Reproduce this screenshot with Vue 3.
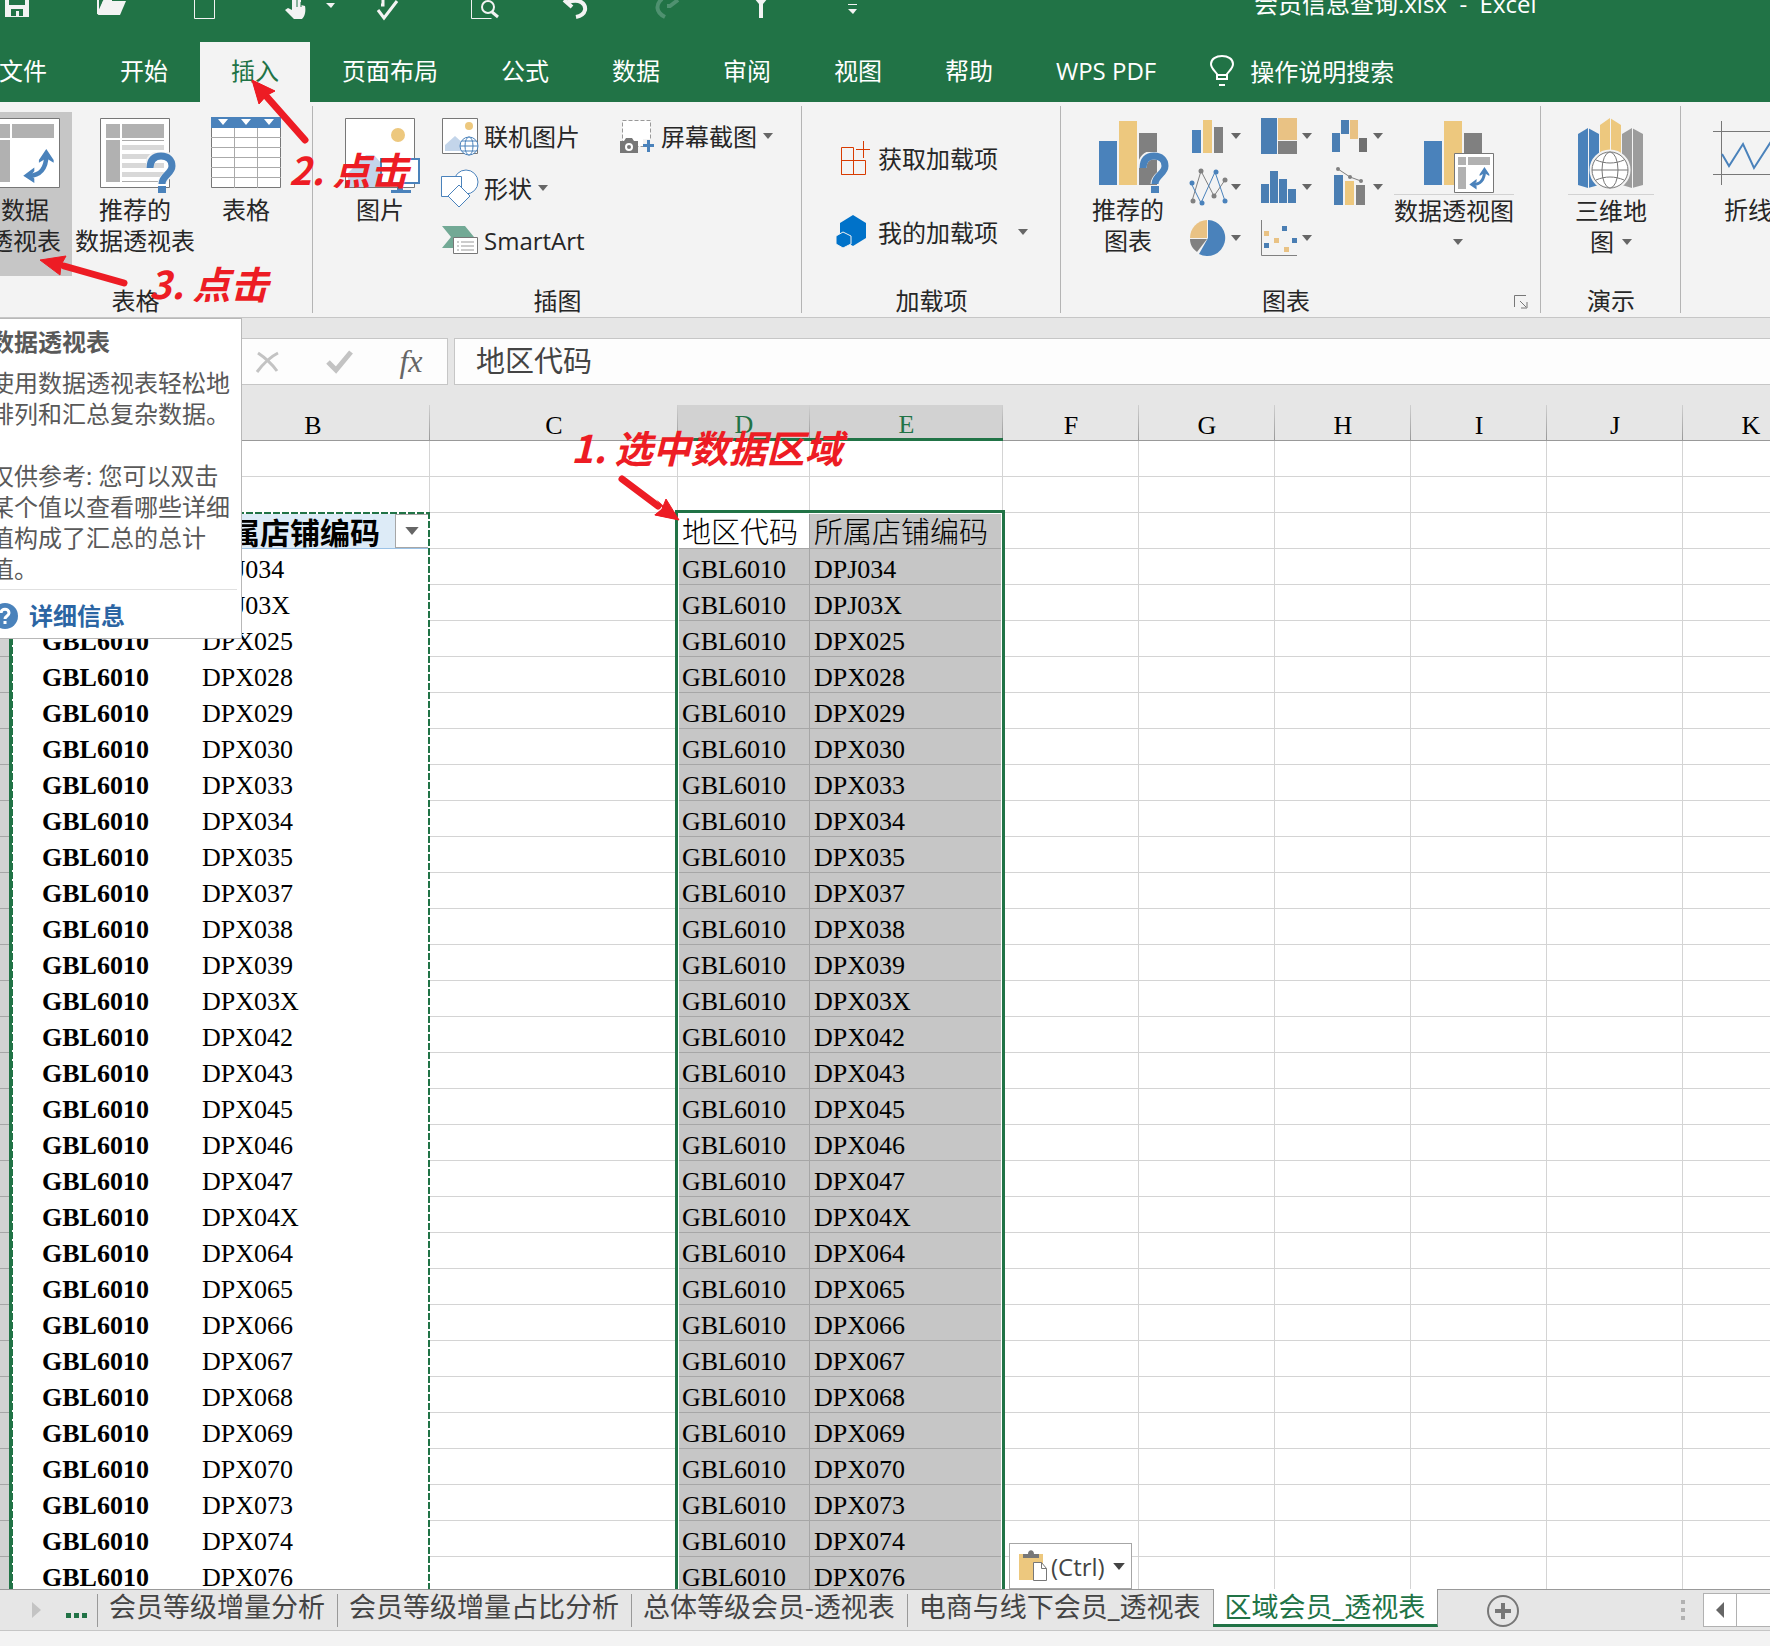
<script setup>
const menuTabs = ['文件', '开始', '插入', '页面布局', '公式', '数据', '审阅', '视图', '帮助', 'WPS PDF']
const columns = ['A', 'B', 'C', 'D', 'E', 'F', 'G', 'H', 'I', 'J', 'K']
const emptyColumns = ['F', 'G', 'H', 'I', 'J', 'K']
const region = 'GBL6010'
const shops = [
  'DPJ034', 'DPJ03X', 'DPX025', 'DPX028', 'DPX029', 'DPX030', 'DPX033', 'DPX034', 'DPX035', 'DPX037',
  'DPX038', 'DPX039', 'DPX03X', 'DPX042', 'DPX043', 'DPX045', 'DPX046', 'DPX047', 'DPX04X', 'DPX064',
  'DPX065', 'DPX066', 'DPX067', 'DPX068', 'DPX069', 'DPX070', 'DPX073', 'DPX074', 'DPX076',
]
const sheets = ['会员等级增量分析', '会员等级增量占比分析', '总体等级会员-透视表', '电商与线下会员_透视表', '区域会员_透视表']
const activeSheet = '区域会员_透视表'
</script>

<template>
  <div class="app">
    <svg class="defs" aria-hidden="true">
      <symbol id="caret" viewBox="0 0 10 6"><path d="M0 0h10L5 6z" fill="currentColor" /></symbol>
      <symbol id="swap" viewBox="0 0 34 38">
        <path d="M7 29C19 29 26 21 26 7" fill="none" stroke="#4a82bb" stroke-width="5" />
        <path d="M18 12L26 0l8 12v3l-8-5-8 5zM13 20L1 29l12 8v-5l-4-3 4-5z" fill="#4a82bb" />
      </symbol>
      <symbol id="question" viewBox="0 0 30 42">
        <path d="M3 16C3 7 8 3 15 3s12 4 12 11c0 8-11 10-11 18" fill="none" stroke="#f3f3f3" stroke-width="9" />
        <path d="M4 16C4 8 8 4 15 4s11 4 11 10c0 8-10 9-10 18" fill="none" stroke="#4a82bb" stroke-width="7" />
        <path d="M12 34h8v7h-8z" fill="#4a82bb" />
      </symbol>
    </svg>

    <header class="top">
      <div class="quick">
        <svg class="quick-icons" viewBox="0 0 880 24" aria-hidden="true">
          <path d="M5 0h24v17H5z" fill="#f3f3f3" /><path d="M9 0h16v5H9zM11 9h12v7h-4v-5h-3v5h-5z" fill="#217346" />
          <path d="M98 0v14L104 1h8" fill="none" stroke="#f3f3f3" stroke-width="2" /><path d="M103 1h23l-6 14H98z" fill="#f3f3f3" />
          <path d="M194.500-2v20.500h20V-2" fill="none" stroke="#f3f3f3" />
          <path d="M292 0v10l-4-2-3 2 9 9h8c3-3 4-8 3-13l-4-1V0z" fill="#f3f3f3" /><path d="M297 0v7M301 2v5" stroke="#217346" />
          <path d="M326 3h9l-4 5z" fill="#f3f3f3" />
          <path d="M378 10l6 8L397 1M381 5h2V0" fill="none" stroke="#f3f3f3" stroke-width="3" />
          <path d="M471.500-2v20.500h20" fill="none" stroke="#f3f3f3" /><circle cx="488" cy="7" r="6" fill="none" stroke="#f3f3f3" stroke-width="2" /><path d="M492 12l6 5" stroke="#f3f3f3" stroke-width="3" />
          <path d="M564 0l8 7M568 2c12-4 18 2 17 8-1 4-4 6-9 7" fill="none" stroke="#f3f3f3" stroke-width="4" />
          <path d="M678 0l-8 6h-3M662-1c-6 5-7 13 3 18" fill="none" stroke="#4f9170" stroke-width="4" />
          <path d="M754-2l5 6v14h4V4l5-6" fill="#f3f3f3" />
          <path d="M848 4h9v1h-9zM848 9h9l-4 5z" fill="#f3f3f3" />
        </svg>
        <h1 class="title">会员信息查询.xlsx&nbsp; -&nbsp; Excel</h1>
      </div>
      <nav class="menu">
        <button v-for="t in menuTabs" :key="t" type="button" class="menu-tab" :class="{ active: t === '插入', file: t === '文件' }">{{ t }}</button>
        <button type="button" class="tell-me">
          <svg width="24" height="34" viewBox="0 0 24 34" fill="none" stroke="#fff" stroke-width="2" aria-hidden="true">
            <path d="M7 25v-5C4 16 1 14 1 10 1 5 6 2 12 2s11 3 11 8c0 4-3 6-6 10v5zM7 21h10M9 31h6" />
          </svg>
          操作说明搜索
        </button>
      </nav>
    </header>

    <section class="ribbon">
      <div class="group tables">
        <div class="tools">
          <button type="button" class="big pressed">
            <svg width="80" height="76" viewBox="0 0 80 76" aria-hidden="true">
              <path d="M5.500.500h69v69h-69z" fill="#fff" stroke="#777" /><path d="M11 6h14v14H11zM27 6h42v14H27zM11 22h14v42H11z" fill="#b1b1b1" />
              <use href="#swap" x="36" y="31" width="34" height="35" />
            </svg>
            <span>数据</span><span>透视表</span>
          </button>
          <button type="button" class="big wide">
            <svg width="80" height="76" viewBox="0 0 80 76" aria-hidden="true">
              <path d="M5.500.500h69v69h-69z" fill="#fff" stroke="#777" /><path d="M11 6h14v14H11zM27 6h42v14H27zM11 22h14v42H11z" fill="#b1b1b1" />
              <path d="M27 27h42v5H27zM27 36h42v5H27zM27 45h42v5H27zM27 54h42v5H27z" fill="#d8d8d8" /><path d="M27 22.500h42M27 63.500h42" stroke="#aaa" />
              <use href="#question" x="51" y="34" width="30" height="42" />
            </svg>
            <span>推荐的</span><span>数据透视表</span>
          </button>
          <button type="button" class="big">
            <svg width="80" height="76" viewBox="0 0 80 76" aria-hidden="true">
              <path d="M5.500.500h69v69h-69z" fill="#fff" stroke="#777" />
              <path d="M5 19.500h70M5 29.500h70M5 39.500h70M5 49.500h70M5 59.500h70M28.500 10v60M51.500 10v60" stroke="#aaa" />
              <path d="M5-1h70v11H5z" fill="#4a82bb" /><path d="M12 1h10l-5 6zM35 1h10l-5 6zM58 1h10l-5 6z" fill="#fff" />
            </svg>
            <span>表格</span>
          </button>
        </div>
        <div class="caption">表格</div>
      </div>

      <div class="group pictures">
        <div class="tools">
          <button type="button" class="big">
            <svg width="80" height="76" viewBox="0 0 80 76" aria-hidden="true">
              <path d="M5.500.500h69v69h-69z" fill="#fff" stroke="#777" /><circle cx="58" cy="17" r="7" fill="#edc87e" />
              <path d="M8 69V55l18-18h8l16 18v14z" fill="#c3d5ea" />
              <path d="M41 41h38v24H41z" fill="#fff" stroke="#4a82bb" stroke-width="2" /><path d="M57 66h6v6h8v3H51v-3h6z" fill="#4a82bb" />
            </svg>
            <span>图片</span>
          </button>
          <div class="stack">
            <button type="button" class="small">
              <svg width="38" height="40" viewBox="0 0 38 40" aria-hidden="true">
                <path d="M2.500 2.500h35v35h-35z" fill="#fff" stroke="#777" /><circle cx="29" cy="10" r="4" fill="#edc87e" /><path d="M5 35V29l10-9 10 9v6z" fill="#c3d5ea" />
                <g fill="#fff" stroke="#4a82bb"><circle cx="29" cy="30" r="9" /><ellipse cx="29" cy="30" rx="4" ry="9" /><path d="M20 30h18M22 25h14M22 35h14" /></g>
              </svg>
              联机图片
            </button>
            <button type="button" class="small">
              <svg width="38" height="40" viewBox="0 0 38 40" fill="#fff" stroke="#4a82bb" aria-hidden="true">
                <circle cx="26" cy="14" r="12" /><path d="M1.500 8.500h20v20h-20z" /><path d="M19 17l11 11-11 11L8 28z" />
              </svg>
              形状<svg class="caret"><use href="#caret" /></svg>
            </button>
            <button type="button" class="small">
              <svg width="38" height="40" viewBox="0 0 38 40" aria-hidden="true">
                <path d="M2 6h23l9 11-9 11H2l9-11z" fill="#72a995" /><path d="M13.500 17.500h24v16h-24z" fill="#fff" stroke="#777" /><path d="M17 22h2m2 0h13M17 26h2m2 0h13M17 30h2m2 0h13" stroke="#999" />
              </svg>
              SmartArt
            </button>
          </div>
          <div class="stack narrow">
            <button type="button" class="small">
              <svg width="38" height="40" viewBox="0 0 38 40" aria-hidden="true">
                <path d="M5.500 4.500h28v26h-28z" fill="#fff" stroke="#999" stroke-dasharray="4 2" /><path d="M3 25h4l2-3h6l2 3h4v12H3z" fill="#777" /><circle cx="12" cy="31" r="3" fill="none" stroke="#fff" stroke-width="2" />
                <path d="M26 23h12v13H26z" fill="#f3f3f3" /><path d="M30 24h3v4h4v3h-4v5h-3v-5h-4v-3h4z" fill="#4a82bb" />
              </svg>
              屏幕截图<svg class="caret"><use href="#caret" /></svg>
            </button>
          </div>
        </div>
        <div class="caption">插图</div>
      </div>

      <div class="group addins">
        <div class="tools column">
          <button type="button" class="small">
            <svg width="38" height="40" viewBox="0 0 38 40" fill="none" stroke="#d83b01" aria-hidden="true">
              <path d="M5.500 9.500h12v27h-12zM5.500 22.500h24v14h-24M17.500 22.500v14M27.500 3v17M20 11.500h14" />
            </svg>
            获取加载项
          </button>
          <button type="button" class="small">
            <svg width="38" height="40" viewBox="0 0 38 40" fill="#0072c9" aria-hidden="true">
              <path d="M17 3l13 8v15l-13 8-13-8V11z" /><path d="M7 20l8 4v8l-8 4-7-4v-8z" stroke="#f3f3f3" />
            </svg>
            我的加载项<svg class="caret far"><use href="#caret" /></svg>
          </button>
        </div>
        <div class="caption">加载项</div>
      </div>

      <div class="group charts">
        <div class="tools">
          <button type="button" class="big">
            <svg width="80" height="76" viewBox="0 0 80 76" aria-hidden="true">
              <path d="M11 23h18v44H11z" fill="#4a82bb" /><path d="M31 3h18v64H31z" fill="#edc87e" /><path d="M51 15h18v52H51z" fill="#808080" />
              <use href="#question" x="51" y="34" width="30" height="42" />
            </svg>
            <span>推荐的</span><span>图表</span>
          </button>
          <div class="chart-grid">
            <button type="button" class="mini" aria-label="柱形图">
              <svg width="38" height="40" viewBox="0 0 38 40"><path d="M2 14h9v23H2z" fill="#4a82bb" /><path d="M13 4h9v33h-9z" fill="#edc87e" /><path d="M24 11h9v26h-9z" fill="#808080" /></svg>
              <svg class="caret"><use href="#caret" /></svg>
            </button>
            <button type="button" class="mini" aria-label="层次结构图">
              <svg width="38" height="40" viewBox="0 0 38 40"><path d="M0 2h16v36H0z" fill="#4a7eb3" /><path d="M17 2h19v22H17z" fill="#e9c284" /><path d="M17 25h19v13H17z" fill="#808080" /></svg>
              <svg class="caret"><use href="#caret" /></svg>
            </button>
            <button type="button" class="mini" aria-label="瀑布图">
              <svg width="38" height="40" viewBox="0 0 38 40"><path d="M0 17h8v19H0zM9 4h8v14H9z" fill="#4a7eb3" /><path d="M18 4h8v19h-8z" fill="#e9c284" /><path d="M27 22h8v14h-8z" fill="#707070" /></svg>
              <svg class="caret"><use href="#caret" /></svg>
            </button>
            <button type="button" class="mini" aria-label="折线图">
              <svg width="38" height="40" viewBox="0 0 38 40">
                <path d="M2 34L11 4l13 25L35 13" fill="none" stroke="#808080" /><path d="M1 16l10 20L25 5l10 29" fill="none" stroke="#4a82bb" />
                <g fill="#808080"><circle cx="3" cy="34" r="2.500" /><circle cx="11" cy="4" r="2.500" /><circle cx="24" cy="29" r="2.500" /><circle cx="35" cy="13" r="2.500" /></g>
                <g fill="#4a82bb"><circle cx="2" cy="16" r="2.500" /><circle cx="12" cy="36" r="2.500" /><circle cx="26" cy="5" r="2.500" /><circle cx="35" cy="34" r="2.500" /></g>
              </svg>
              <svg class="caret"><use href="#caret" /></svg>
            </button>
            <button type="button" class="mini" aria-label="统计图">
              <svg width="38" height="40" viewBox="0 0 38 40" fill="#4a7eb3"><path d="M0 17h8v19H0zM9 4h8v32H9zM18 12h8v24h-8zM27 22h8v14h-8z" /></svg>
              <svg class="caret"><use href="#caret" /></svg>
            </button>
            <button type="button" class="mini" aria-label="组合图">
              <svg width="38" height="40" viewBox="0 0 38 40"><path d="M2 8h9v30H2z" fill="#4a7eb3" /><path d="M13 14h9v24h-9z" fill="#edc87e" /><path d="M24 18h9v20h-9z" fill="#808080" /><path d="M6 2l12 8 11 4" fill="none" stroke="#808080" /><g fill="#808080"><circle cx="6" cy="2" r="2" /><circle cx="18" cy="10" r="2" /><circle cx="29" cy="14" r="2" /></g></svg>
              <svg class="caret"><use href="#caret" /></svg>
            </button>
            <button type="button" class="mini" aria-label="饼图">
              <svg width="38" height="40" viewBox="0 0 38 40"><path d="M18 20V2A18 18 0 1 1 9 36z" fill="#4a82bb" /><path d="M17 20V2A18 18 0 0 0 0 20z" fill="#e9c284" /><path d="M17 21H0c0 6 3 10 7 13z" fill="#808080" /></svg>
              <svg class="caret"><use href="#caret" /></svg>
            </button>
            <button type="button" class="mini" aria-label="散点图">
              <svg width="38" height="40" viewBox="0 0 38 40"><path d="M.500 2v35.500H36" fill="none" stroke="#808080" /><path d="M3 13h5v5H3zM13 20h5v5h-5zM23 29h5v5h-5z" fill="#e9c284" /><path d="M21 8h5v5h-5zM3 25h5v5H3zM31 20h5v5h-5z" fill="#4a7eb3" /></svg>
              <svg class="caret"><use href="#caret" /></svg>
            </button>
          </div>
          <button type="button" class="big split pivot">
            <svg width="80" height="76" viewBox="0 0 80 76" aria-hidden="true">
              <path d="M10 23h18v44H10z" fill="#4a82bb" /><path d="M30 3h18v64H30z" fill="#edc87e" /><path d="M50 15h18v52H50z" fill="#808080" />
              <path d="M40.500 35.500h39v39h-39z" fill="#fff" stroke="#777" /><path d="M44 39h8v8h-8zM54 39h22v8H54zM44 49h8v22h-8z" fill="#b1b1b1" />
              <use href="#swap" x="53" y="49" width="24" height="23" />
            </svg>
            <span>数据透视图</span><span class="lone"><svg class="caret"><use href="#caret" /></svg></span>
          </button>
        </div>
        <div class="caption">图表</div>
        <button type="button" class="launcher" aria-label="图表选项">
          <svg width="14" height="14" viewBox="0 0 14 14" fill="none" stroke="#777"><path d="M.500 12V.500H12M6 6l6 6M13 7v6H7" /></svg>
        </button>
      </div>

      <div class="group tours">
        <div class="tools">
          <button type="button" class="big split">
            <svg width="80" height="76" viewBox="0 0 80 76" aria-hidden="true">
              <path d="M7 16l10-6 11 6v51l-11 3-10-3z" fill="#4a82bb" /><path d="M29 7L39 0l11 7v40H29z" fill="#edc87e" /><path d="M51 16l10-6 11 6v51l-11 3-10-3z" fill="#9c9c9c" />
              <path d="M17.500 10v60M39.500 0v40M61.500 10v60" stroke="#f3f3f3" />
              <g fill="#fff" stroke="#777"><circle cx="39" cy="52" r="19" stroke="#f3f3f3" stroke-width="3" /><circle cx="39" cy="52" r="18" /><ellipse cx="39" cy="52" rx="8" ry="18" /><path d="M21 52h36" /><path d="M25 42c9 4 19 4 28 0M25 62c9-4 19-4 28 0" fill="none" /></g>
            </svg>
            <span>三维地</span><span>图<svg class="caret"><use href="#caret" /></svg></span>
          </button>
        </div>
        <div class="caption">演示</div>
      </div>

      <div class="group sparklines">
        <div class="tools">
          <button type="button" class="big">
            <svg width="80" height="76" viewBox="0 0 80 76" aria-hidden="true">
              <path d="M13.500 3v64M5 13.500h74M5 56.500h74" stroke="#777" /><path d="M14 36l7 12 14-22 11 24 18-28 14 20" fill="none" stroke="#4a82bb" stroke-width="2" />
            </svg>
            <span>折线</span>
          </button>
        </div>
      </div>
    </section>

    <section class="formula">
      <div class="formula-tools">
        <button type="button" aria-label="取消"><svg width="26" height="24" viewBox="0 0 26 24" fill="none" stroke="#c3c3c3" stroke-width="3"><path d="M3 22C9 14 16 7 24 3M4 3c6 4 14 11 19 18" /></svg></button>
        <button type="button" aria-label="输入"><svg width="28" height="24" viewBox="0 0 28 24" fill="none" stroke="#c3c3c3" stroke-width="5"><path d="M3 12l8 8L26 2" /></svg></button>
        <button type="button" class="fx" aria-label="插入函数">fx</button>
      </div>
      <input class="formula-input" value="地区代码" aria-label="编辑栏">
    </section>

    <main class="grid">
      <table>
        <colgroup>
          <col class="w-head"><col class="w-a"><col class="w-b"><col class="w-c"><col class="w-d"><col class="w-e">
          <col v-for="c in emptyColumns" :key="c" class="w-f">
        </colgroup>
        <thead>
          <tr><th /><th v-for="c in columns" :key="c" :class="{ picked: c === 'D' || c === 'E' }">{{ c }}</th></tr>
        </thead>
        <tbody>
          <tr v-for="n in 2" :key="'blank' + n"><td class="row-head" /><td v-for="c in columns" :key="c" /></tr>
          <tr>
            <td class="row-head" /><td class="field" /><td class="field b-field">所属店铺编码</td><td />
            <td class="cn first">地区代码</td><td class="sel cn">所属店铺编码</td><td v-for="c in emptyColumns" :key="c" />
          </tr>
          <tr v-for="s in shops" :key="s">
            <td class="row-head" /><td class="pivot-cell region">{{ region }}</td><td class="pivot-cell">{{ s }}</td><td />
            <td class="sel">{{ region }}</td><td class="sel">{{ s }}</td><td v-for="c in emptyColumns" :key="c" />
          </tr>
        </tbody>
      </table>
      <div class="copied" />
      <div class="selection" />
      <button type="button" class="filter" aria-label="筛选"><svg width="14" height="8"><use href="#caret" /></svg></button>
      <button type="button" class="paste">
        <svg width="30" height="32" viewBox="0 0 30 32" aria-hidden="true">
          <path d="M1 4h24v26H1z" fill="#edc87e" /><path d="M5 8V4h5c0-5 6-5 6 0h5v4z" fill="#777" /><path d="M15.500 12.500h8l5 6v12h-13z" fill="#fff" stroke="#777" /><path d="M23.500 12.500v6h5" fill="none" stroke="#777" />
        </svg>
        (Ctrl)
        <svg class="paste-caret"><use href="#caret" /></svg>
      </button>
    </main>

    <footer class="bottom">
      <div class="sheets">
        <div class="sheet-nav">
          <svg width="9" height="16" viewBox="0 0 9 16"><path d="M0 0l9 8-9 8z" fill="#c3c3c3" /></svg>
          <svg width="22" height="5" viewBox="0 0 22 5"><path d="M0 0h5v5H0zM8 0h5v5H8zM16 0h5v5h-5z" fill="#217346" /></svg>
        </div>
        <button v-for="s in sheets" :key="s" type="button" class="sheet" :class="{ current: s === activeSheet }">{{ s }}</button>
        <button type="button" class="add" aria-label="新工作表">
          <svg width="34" height="34" viewBox="0 0 34 34" fill="none" stroke="#777"><circle cx="17" cy="17" r="15" stroke-width="2" /><path d="M17 9v16M9 17h16" stroke-width="4" /></svg>
        </button>
        <div class="scroll">
          <svg width="4" height="20" viewBox="0 0 4 20"><path d="M0 0h4v4H0zM0 8h4v4H0zM0 16h4v4H0z" fill="#b1b1b1" /></svg>
          <button type="button" class="scroll-left" aria-label="向左滚动"><svg width="8" height="16" viewBox="0 0 8 16"><path d="M8 0v16L0 8z" fill="#666" /></svg></button>
          <div class="thumb" />
        </div>
      </div>
    </footer>

    <aside class="tip">
      <strong>数据透视表</strong>
      <p>使用数据透视表轻松地<br>排列和汇总复杂数据。</p>
      <p>仅供参考: 您可以双击<br>某个值以查看哪些详细<br>值构成了汇总的总计<br>值。</p>
      <a href="#more">
        <svg width="28" height="28" viewBox="0 0 28 28" aria-hidden="true"><circle cx="14" cy="14" r="13" fill="#4a82bb" /><path d="M10 11c0-5 8-5 8 0 0 3-4 3-4 6M14 19v3" fill="none" stroke="#fff" stroke-width="3" /></svg>
        详细信息
      </a>
    </aside>

    <svg class="arrows" width="700" height="530" viewBox="0 0 700 530" aria-hidden="true">
      <g stroke="#ed1c24" stroke-width="7" stroke-linecap="round"><path d="M305 140l-38-43M124 283l-60-17M622 479l36 27" /></g>
      <g fill="#ed1c24"><path d="M252 80l23 11-9 5-7 8z" /><path d="M252 80l23 11-8 4-8 9z" stroke="#ed1c24" /><path d="M40 260l26-4-5 9-1 10z" stroke="#ed1c24" /><path d="M679 520l-25-5 9-6-6-9-1-1z" /><path d="M679 520l-24-5 7-6 4-10z" stroke="#ed1c24" /></g>
    </svg>
    <span class="note step-1">1. 选中数据区域</span>
    <span class="note step-2">2. 点击</span>
    <span class="note step-3">3. 点击</span>
  </div>
</template>

<style>
html, body { margin: 0; }
</style>

<style scoped>
.app {
  position: relative;
  display: flex;
  flex-direction: column;
  height: 100vh;
  overflow: hidden;
  background: #e6e6e6;
  color: #262626;
  font: 24px/31px "Open Sans", "Noto Sans CJK SC", sans-serif;
}
.defs { position: absolute; width: 0; height: 0; }
svg { display: block; flex: none; overflow: visible; }
button { margin: 0; padding: 0; border: 0; background: none; color: inherit; font: inherit; white-space: nowrap; }

.top { background: #217346; color: #fff; }
.quick { display: flex; height: 42px; }
.quick-icons { width: 880px; height: 24px; }
.title { margin: -12px 0 0 374px; font-size: 24px; line-height: 32px; font-weight: 400; white-space: nowrap; }
.menu { display: flex; gap: 1px; height: 60px; margin-left: -32px; }
.menu-tab { padding: 0 31px 4px; }
.menu-tab.file { padding-right: 41px; }
.menu-tab.active { background: #f3f3f3; color: #217346; }
.tell-me { display: flex; align-items: center; gap: 16px; margin-left: 22px; padding-bottom: 2px; }

.ribbon { display: flex; height: 215px; border-bottom: 1px solid #c6c6c6; background: #f3f3f3; overflow: hidden; }
.group { position: relative; flex: none; display: flex; flex-direction: column; box-sizing: border-box; padding-top: 10px; }
.group::after { content: ""; position: absolute; top: 4px; right: 0; width: 1px; height: 207px; background: #b4b4b4; }
.tools { display: flex; height: 174px; }
.caption { text-align: center; line-height: 30px; }
.tables { width: 355px; margin-left: -42px; padding-left: 20px; }
.tables .caption { margin-left: -20px; }
.pictures { width: 489px; }
.addins { width: 259px; }
.charts { width: 480px; }
.tours { width: 140px; }
.sparklines { width: 300px; }
.pictures .tools, .charts .tools, .sparklines .tools { padding-left: 19px; }
.tours .tools { justify-content: center; }
.charts .caption { padding-right: 30px; }
.big { width: 96px; height: 164px; padding-top: 6px; display: flex; flex-direction: column; align-items: center; }
.big span { display: flex; align-items: center; gap: 8px; height: 31px; }
.big.pressed { width: 94px; background: #c6c6c6; }
.big.wide { width: 126px; }
.big.split { width: 86px; }
.big.split svg + span { border-top: 1px solid #d2d2d2; align-self: stretch; justify-content: center; }
.big.split.pivot { width: 120px; }
.big .lone { padding-left: 8px; }
.caret { width: 10px; height: 6px; color: #666; }
.stack { width: 177px; margin: -2px 0 0 12px; }
.stack.narrow { width: auto; margin-left: 0; }
.small { display: flex; align-items: center; gap: 6px; height: 52px; }
.tools.column { flex-direction: column; gap: 22px; padding: 20px 0 0 34px; box-sizing: border-box; }
.column .small { gap: 4px; }
.caret.far { margin-left: 16px; }
.chart-grid { display: grid; grid-template-columns: 71px 71px 62px; grid-auto-rows: 51px; margin: -2px 0 0 14px; }
.mini { display: flex; align-items: center; gap: 3px; }
.launcher { position: absolute; right: 13px; bottom: 8px; }

.formula { display: flex; gap: 6px; height: 47px; padding: 20px 0; }
.formula-tools { width: 448px; box-sizing: border-box; display: flex; justify-content: flex-end; border: 1px solid #c6c6c6; background: #fdfdfd; }
.formula-tools button { width: 72px; display: flex; align-items: center; justify-content: center; }
.formula-tools .fx { font: italic 32px "Liberation Serif", serif; color: #666; }
.formula-input { flex: 1; min-width: 0; box-sizing: border-box; margin: 0; padding: 0 21px 6px; border: 1px solid #c6c6c6; border-right: 0; background: #fdfdfd; color: #444; font: 29px "Open Sans", "Noto Sans CJK SC", sans-serif; }

.grid { position: relative; flex: 1; min-height: 0; overflow: hidden; background: #fff; }
table { table-layout: fixed; width: 1819px; border-collapse: separate; border-spacing: 0; color: #000; font: 26px/29px "Liberation Serif", "Noto Sans CJK SC", serif; }
.w-head { width: 10px; }
.w-a { width: 186px; }
.w-b { width: 234px; }
.w-c { width: 248px; }
.w-d { width: 132px; }
.w-e { width: 193px; }
.w-f { width: 136px; }
th, td { box-sizing: border-box; height: 36px; padding: 0 0 0 4px; text-align: left; white-space: nowrap; border: 0 solid #d4d4d4; border-width: 0 1px 1px 0; overflow: hidden; }
td { padding-top: 6px; }
th { padding: 6px 0 0; border-right: 0; border-bottom-color: #999; text-align: center; font-weight: 400; background: linear-gradient(#d0d0d0, #999) right / 1px 100% no-repeat #e6e6e6; }
th.picked { color: #217346; background-color: #d2d2d2; border-bottom: 3px solid #217346; line-height: 27px; }
.row-head { background: #d2d2d2; border-color: #a6a6a6; }
.field { background: #ddebf7; border-bottom-color: #9bc2e6; border-right: 0; }
.b-field { font-size: 30px; font-weight: 700; }
.pivot-cell { border-color: transparent; padding-left: 6px; }
.region { padding-left: 32px; font-weight: 700; }
.cn { font-size: 29px; font-weight: 300; }
.first { border-color: #a6a6a6; }
.sel { background: #c6c6c6; border-color: #a6a6a6; }
.selection { position: absolute; left: 675px; top: 105px; bottom: -10px; width: 330px; box-sizing: border-box; border: 3px solid #217346; box-shadow: inset 0 0 0 1px #fff; }
.copied {
  position: absolute; left: 9px; top: 107px; bottom: 0; width: 421px; box-sizing: border-box; border-left: 3px solid #217346;
  background:
    repeating-linear-gradient(90deg, #217346 0 7px, #fff 7px 9px) top / 100% 2px no-repeat,
    repeating-linear-gradient(#217346 0 7px, #fff 7px 9px) right / 2px 100% no-repeat,
    repeating-linear-gradient(#217346 0 7px, #fff 7px 9px) left / 1px 100% no-repeat;
}
.filter { position: absolute; left: 395px; top: 109px; width: 33px; height: 34px; display: flex; align-items: center; justify-content: center; border: 1px solid #a6a6a6; border-right: 0; background: #fff; color: #666; box-sizing: border-box; }
.paste { position: absolute; left: 1009px; bottom: 0; width: 123px; height: 46px; box-sizing: border-box; display: flex; align-items: center; gap: 3px; padding-left: 8px; border: 1px solid #a6a6a6; background: #fff; color: #444; }
.paste-caret { width: 12px; height: 7px; margin-left: 5px; }

.bottom { padding-bottom: 15px; background: #f3f3f3; }
.sheets { display: flex; height: 40px; border-top: 1px solid #999; border-bottom: 1px solid #c6c6c6; background: #e6e6e6; }
.sheet-nav { width: 97px; box-sizing: border-box; display: flex; align-items: center; gap: 25px; padding: 0 0 0 32px; }
.sheet-nav svg + svg { margin-top: 10px; }
.sheet { position: relative; height: 37px; padding: 0 12px 4px; color: #444; font-size: 27px; line-height: 33px; }
.sheet::before { content: ""; position: absolute; left: 0; top: 4px; bottom: 0; width: 1px; background: #999; }
.sheet.current { margin-top: -1px; height: 38px; box-sizing: border-box; border-bottom: 3px solid #217346; border-right: 1px solid #999; background: #fff; color: #217346; padding-bottom: 0; }
.sheet.current::before { top: 0; }
.add { margin-left: 48px; padding-top: 2px; }
.scroll { display: flex; align-items: center; width: 89px; margin-left: auto; }
.scroll-left { display: flex; align-items: center; justify-content: center; width: 34px; height: 34px; box-sizing: border-box; margin-left: 18px; border: 1px solid #b1b1b1; background: #fff; }
.thumb { flex: 1; height: 32px; border: 1px solid #b1b1b1; border-width: 1px 0; background: #fff; }

.tip { position: absolute; left: -20px; top: 318px; width: 262px; height: 321px; box-sizing: border-box; padding: 7px 4px 0 9px; border: 1px solid #b8b8b8; background: #fff; color: #595959; white-space: nowrap; }
.tip strong { display: block; margin-bottom: 10px; }
.tip p { margin: 0 0 31px; }
.tip p + p { margin-bottom: 5px; }
.tip a { display: flex; align-items: center; gap: 10px; height: 51px; margin-left: -7px; padding-left: 8px; border-top: 1px solid #e0e0e0; color: #2b65a3; font-weight: 700; text-decoration: none; }

.arrows { position: absolute; left: 0; top: 0; pointer-events: none; }
.note { position: absolute; color: #ed1c24; font-family: "Noto Sans CJK SC", sans-serif; font-size: 38px; font-weight: 700; font-style: italic; line-height: 44px; white-space: nowrap; }
.step-1 { left: 571px; top: 425px; }
.step-2 { left: 289px; top: 147px; }
.step-3 { left: 149px; top: 261px; }
</style>
